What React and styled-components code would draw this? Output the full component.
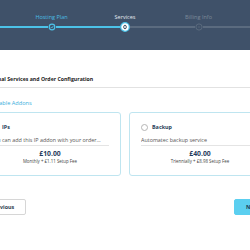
import React from "react";
import styled, { createGlobalStyle } from "styled-components";

const Global = createGlobalStyle`
  html, body { margin: 0; padding: 0; background: #ffffff; }
  body { font-family: "Open Sans", "Noto Sans", sans-serif; overflow: hidden; width: 250px; }
  * { box-sizing: border-box; }
`;

const Page = styled.div`
  width: 250px;
  overflow: hidden;
`;

const Header = styled.header`
  height: 50px;
  background: #3f5169;
  padding-top: 14px;
`;

const Stepper = styled.ol`
  list-style: none;
  margin: 0;
  padding: 0;
  display: grid;
  grid-template-columns: 1fr repeat(3, 73.5px) 1fr;
  grid-template-rows: 7px 12px;
`;

const Step = styled.li`
  display: grid;
  grid-row: 1 / span 2;
  grid-template-rows: subgrid;
`;

const Edge = styled.li`
  grid-row: 2;
  display: flex;
  align-items: center;
`;

const StepLabel = styled.span`
  font-size: 5.5px;
  line-height: 7px;
  text-align: center;
  white-space: nowrap;
  color: ${(p) => (p.$state === "done" ? "#4cbde3" : p.$state === "current" ? "#e4e9ef" : "#7d8a99")};
`;

const Track = styled.div`
  display: flex;
  align-items: center;
  height: 12px;
`;

const Seg = styled.span`
  flex: 1;
  height: 1.5px;
  background: ${(p) => (p.$on ? "#4cc2e8" : "#5b6b7f")};
`;

const DotBox = styled.span`
  flex: 0 0 auto;
  display: flex;
  align-items: center;
  justify-content: center;
`;

function Dot({ state }) {
  if (state === "done") {
    return (
      <svg width="8" height="8" viewBox="0 0 8 8">
        <circle cx="4" cy="4" r="3.4" fill="#4cc2e8" />
        <circle cx="4" cy="4" r="2.2" fill="#3f5169" />
        <path d="M2.8 4.1 L3.7 5 L5.3 3.1" stroke="#4cc2e8" strokeWidth="0.9" fill="none" />
      </svg>
    );
  }
  if (state === "current") {
    return (
      <svg width="10" height="10" viewBox="0 0 10 10">
        <circle cx="5" cy="5" r="4.3" fill="#ffffff" stroke="#4cc2e8" strokeWidth="1.2" />
        <ellipse cx="5" cy="5" rx="1.3" ry="1.8" fill="none" stroke="#2f3f52" strokeWidth="0.9" />
      </svg>
    );
  }
  return (
    <svg width="8" height="8" viewBox="0 0 8 8">
      <circle cx="4" cy="4" r="3.1" fill="#3f5169" stroke="#5e6d80" strokeWidth="0.9" />
      <circle cx="4" cy="4" r="1.3" fill="#4a5a6f" />
    </svg>
  );
}

const steps = [
  { label: "Hosting Plan", state: "done" },
  { label: "Services", state: "current" },
  { label: "Billing Info", state: "todo" },
];

const Main = styled.main`
  display: flex;
  justify-content: center;
`;

const Content = styled.section`
  flex: 0 0 292px;
  padding-top: 25px;
`;

const Title = styled.h2`
  margin: 0;
  font-size: 5.2px;
  line-height: 8px;
  font-weight: 700;
  color: #222;
  white-space: nowrap;
  padding-bottom: 4px;
  border-bottom: 1px solid #e2e2e2;
`;

const SubHeading = styled.h3`
  margin: 11px 0 5px 8px;
  font-size: 5.6px;
  line-height: 8px;
  font-weight: 400;
  color: #3aaedb;
`;

const Cards = styled.div`
  display: grid;
  grid-template-columns: 1fr 1fr;
  gap: 8px;
`;

const Card = styled.label`
  display: flex;
  flex-direction: column;
  border: 1px solid #bfe5f0;
  border-radius: 3px;
  background: #fff;
  padding: 10px 11px 10px 11px;
  height: 64px;
`;

const CardHead = styled.div`
  display: flex;
  align-items: center;
  gap: 4px;
  height: 8px;
`;

const Radio = styled.span`
  width: 7px;
  height: 7px;
  border-radius: 50%;
  border: 0.8px solid #b5b5b5;
  background: #fff;
  flex: 0 0 auto;
`;

const CardName = styled.span`
  font-size: 5.4px;
  font-weight: 700;
  color: #263c58;
`;

const Desc = styled.p`
  margin: 4.5px 0 0;
  font-size: 5.4px;
  line-height: 8px;
  color: #555;
  white-space: nowrap;
  overflow: hidden;
  padding-bottom: 1px;
  border-bottom: 1px solid #e4e4e4;
`;

const Price = styled.div`
  margin-top: 3px;
  text-align: center;
  font-size: 6.8px;
  line-height: 9px;
  font-weight: 700;
  color: #1f3a5c;
`;

const Cycle = styled.div`
  text-align: center;
  font-size: 4.4px;
  line-height: 7px;
  color: #444;
  white-space: nowrap;
`;

const Actions = styled.div`
  display: flex;
  justify-content: space-between;
  margin-top: 23px;
`;

const Button = styled.button`
  height: 16px;
  padding: 0 11px;
  border-radius: 2px;
  font-family: inherit;
  font-size: 5.4px;
  font-weight: 700;
  border: 1px solid ${(p) => (p.$primary ? "#5bcff0" : "#d6d6d6")};
  background: ${(p) => (p.$primary ? "#5bcff0" : "#fff")};
  color: ${(p) => (p.$primary ? "#1d3b52" : "#2f3f52")};
`;

const addons = [
  { name: "IPs", desc: "You can add this IP addon with your order...", price: "£10.00", cycle: "Monthly + £1.11 Setup Fee" },
  { name: "Backup", desc: "Automatec backup service", price: "£40.00", cycle: "Triennially + £8.98 Setup Fee" },
];

export default function App() {
  return (
    <Page>
      <Global />
      <Header>
        <Stepper>
          <Edge aria-hidden="true">
            <Seg $on />
          </Edge>
          {steps.map((s) => (
            <Step key={s.label}>
              <StepLabel $state={s.state}>{s.label}</StepLabel>
              <Track>
                <Seg $on={s.state !== "todo"} />
                <DotBox>
                  <Dot state={s.state} />
                </DotBox>
                <Seg $on={s.state === "done"} />
              </Track>
            </Step>
          ))}
          <Edge aria-hidden="true">
            <Seg />
          </Edge>
        </Stepper>
      </Header>
      <Main>
        <Content>
          <Title>Additional Services and Order Configuration</Title>
          <SubHeading>Available Addons</SubHeading>
          <Cards>
            {addons.map((a) => (
              <Card key={a.name}>
                <CardHead>
                  <Radio />
                  <CardName>{a.name}</CardName>
                </CardHead>
                <Desc>{a.desc}</Desc>
                <Price>{a.price}</Price>
                <Cycle>{a.cycle}</Cycle>
              </Card>
            ))}
          </Cards>
          <Actions>
            <Button>Previous</Button>
            <Button $primary>Next</Button>
          </Actions>
        </Content>
      </Main>
    </Page>
  );
}
